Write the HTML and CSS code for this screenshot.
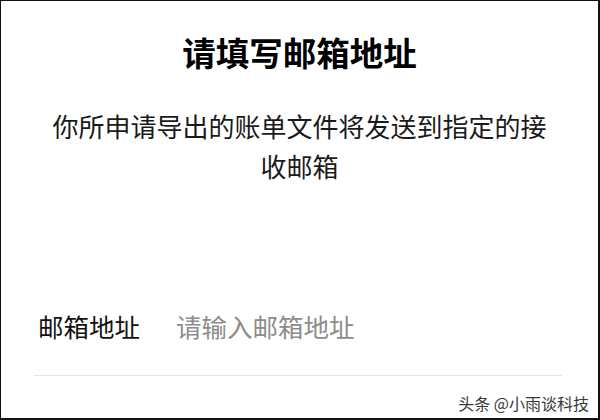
FILE: index.html
```html
<!DOCTYPE html>
<html lang="zh-CN">
<head>
<meta charset="utf-8">
<title>请填写邮箱地址</title>
<link rel="stylesheet" href="styles.css">
</head>
<body>
<div class="sheet">
  <h1 class="title">请填写邮箱地址</h1>
  <p class="desc">你所申请导出的账单文件将发送到指定的接收邮箱</p>
  <div class="field">
    <span class="field-label">邮箱地址</span>
    <input class="field-input" type="text" placeholder="请输入邮箱地址">
  </div>
  <span class="watermark">头条 @小雨谈科技</span>
</div>
</body>
</html>
```

FILE: styles.css
```css
* { box-sizing: border-box; }

body {
  margin: 0;
  background: #fff;
  font-family: "Noto Sans CJK SC", "Noto Sans", sans-serif;
}

.sheet {
  position: relative;
  width: 600px;
  height: 420px;
  border-top: 1px solid #111;
  border-left: 1px solid #111;
  border-right: 2px solid #111;
  border-bottom: 2px solid #111;
  display: flex;
  flex-direction: column;
  background: #fff;
}

.title {
  margin: 31px 0 0;
  font-size: 33.5px;
  line-height: 40px;
  font-weight: 700;
  text-align: center;
  color: #000;
}

.desc {
  margin: 34px 0 0;
  padding: 0 50px;
  font-size: 26px;
  line-height: 40px;
  text-align: center;
  color: #1a1a1a;
}

.field {
  margin: 120px 36px 0 33px;
  padding: 0 0 29px 4px;
  border-bottom: 1px solid #e6e6e6;
  display: flex;
  align-items: center;
  gap: 36px;
}

.field-label {
  font-size: 25.5px;
  line-height: 40px;
  color: #111;
  white-space: nowrap;
}

.field-input {
  flex: 1;
  min-width: 0;
  border: 0;
  outline: none;
  padding: 0;
  font-family: inherit;
  font-size: 25.5px;
  line-height: 40px;
  height: 40px;
  color: #111;
  background: transparent;
}

.field-input::placeholder {
  color: #8c8c8c;
}

.watermark {
  position: absolute;
  right: 9px;
  bottom: 5px;
  font-size: 16px;
  line-height: 20px;
  color: #3a3a3a;
  text-shadow: 0 0 2px #fff;
}
```
